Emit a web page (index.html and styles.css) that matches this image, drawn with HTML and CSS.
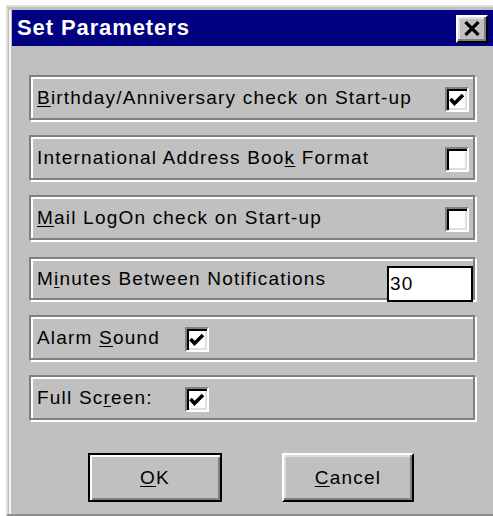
FILE: index.html
```html
<!DOCTYPE html>
<html lang="en">
<head>
<meta charset="utf-8">
<title>Set Parameters</title>
<link rel="stylesheet" href="styles.css">
</head>
<body>
<div class="window">
  <div class="frame">
    <div class="titlebar">
      <span class="title">Set Parameters</span>
      <button class="close" aria-label="Close">
        <svg width="16" height="15" viewBox="0 0 16 15" aria-hidden="true">
          <path d="M1.5 1L14.5 14M14.5 1L1.5 14" stroke="#000" stroke-width="3.2" fill="none"/>
        </svg>
      </button>
    </div>

    <div class="content">
      <div class="group">
        <span class="label"><u>B</u>irthday/Anniversary check on Start-up</span>
        <span class="check">
          <svg class="tick" viewBox="0 0 20 21" aria-hidden="true"><polyline points="3.5,10 7.5,14.5 16,6" /></svg>
        </span>
      </div>
      <div class="group">
        <span class="label">International Address Boo<u>k</u> Format</span>
        <span class="check"></span>
      </div>
      <div class="group">
        <span class="label"><u>M</u>ail LogOn check on Start-up</span>
        <span class="check"></span>
      </div>
      <div class="group group--field">
        <span class="label">M<u>i</u>nutes Between Notifications</span>
        <input class="field" type="text" value="30">
      </div>
      <div class="group">
        <span class="label label--short">Alarm <u>S</u>ound</span>
        <span class="check">
          <svg class="tick" viewBox="0 0 20 21" aria-hidden="true"><polyline points="3.5,10 7.5,14.5 16,6" /></svg>
        </span>
      </div>
      <div class="group">
        <span class="label label--short">Full Sc<u>r</u>een:</span>
        <span class="check">
          <svg class="tick" viewBox="0 0 20 21" aria-hidden="true"><polyline points="3.5,10 7.5,14.5 16,6" /></svg>
        </span>
      </div>
    </div>

    <div class="actions">
      <button class="btn btn--default"><u>O</u>K</button>
      <button class="btn btn--cancel"><u>C</u>ancel</button>
    </div>
  </div>
</div>
</body>
</html>
```

FILE: styles.css
```css
* {
  box-sizing: border-box;
}

html,
body {
  margin: 0;
  height: 516px;
  overflow: hidden;
  background: #fff;
}

body {
  font-family: "Liberation Sans", Arial, sans-serif;
  font-size: 19px;
  color: #000;
}

/* dialog window with its bevelled outer edge */
.window {
  margin: 5px 0 0 6px;
  width: 490px;
  background: #c0c0c0;
  border-top: 2px solid #dcdcdc;
  border-left: 2px solid #dcdcdc;
  border-bottom: 2px solid #8e8e8e;
  padding: 3px 0 0 1px;
}

.frame {
  height: 504px;
  border-left: 2px solid #f4f4f4;
  padding-left: 1px;
  display: flex;
  flex-direction: column;
}

/* caption bar */
.titlebar {
  height: 36px;
  background: #000080;
  display: flex;
  align-items: center;
  justify-content: space-between;
  padding: 0 8px 0 5px;
}

.title {
  color: #fff;
  font-weight: bold;
  font-size: 22px;
  letter-spacing: 0.9px;
  line-height: 36px;
  white-space: nowrap;
}

.close {
  width: 32px;
  height: 28px;
  margin-top: 1px;
  padding: 0;
  background: #c0c0c0;
  border: 2px solid;
  border-color: #fff #000 #000 #fff;
  box-shadow: inset -2px -2px #808080, inset 2px 2px #dfdfdf;
  display: flex;
  align-items: center;
  justify-content: center;
}

.close svg {
  display: block;
}

/* option rows */
.content {
  display: flex;
  flex-direction: column;
  gap: 15px;
  padding: 29px 0 0 17px;
}

.group {
  width: 446px;
  height: 45px;
  border: 2px solid #808080;
  box-shadow: inset 2px 2px #fff, 2px 2px #fff;
  display: flex;
  align-items: center;
  padding: 0 4px 0 6px;
}

.group--field {
  height: 43px;
  margin-top: 2px;
}

.label {
  flex: 1;
  letter-spacing: 1.2px;
  white-space: nowrap;
  text-underline-offset: 2px;
}

.label--short {
  flex: none;
  width: 148px;
}

/* sunken check box */
.check {
  flex: none;
  width: 24px;
  height: 25px;
  margin-top: 4px;
  background: #fff;
  border: 2px solid;
  border-color: #808080 #fff #fff #808080;
  box-shadow: inset 2px 2px #000, inset -2px -2px #dfdfdf;
}

.tick {
  display: block;
  width: 20px;
  height: 21px;
}

.tick polyline {
  fill: none;
  stroke: #000;
  stroke-width: 3.6;
  stroke-linejoin: miter;
}

/* numeric entry */
.field {
  flex: none;
  align-self: flex-end;
  width: 86px;
  height: 36px;
  margin: 0 -4px -4px 0;
  padding: 0 1px;
  border: 2px solid #000;
  border-radius: 0;
  background: #fff;
  font-family: "Liberation Sans", Arial, sans-serif;
  font-size: 19px;
  letter-spacing: 1.2px;
  color: #000;
  outline: none;
}

/* push buttons */
.actions {
  display: flex;
  gap: 60px;
  margin-top: 33px;
  padding-left: 76px;
}

.btn {
  width: 134px;
  height: 49px;
  padding: 0;
  background: #c0c0c0;
  font-family: "Liberation Sans", Arial, sans-serif;
  font-size: 19px;
  letter-spacing: 1.2px;
  color: #000;
  text-underline-offset: 2px;
}

.btn--default {
  border: 2px solid #000;
  box-shadow: inset 2px 2px #fff, inset -2px -2px #808080;
}

.btn--cancel {
  width: 132px;
  border: 2px solid;
  border-color: #fff #000 #000 #fff;
  box-shadow: inset -2px -2px #808080, inset 2px 2px #dfdfdf;
}
```
